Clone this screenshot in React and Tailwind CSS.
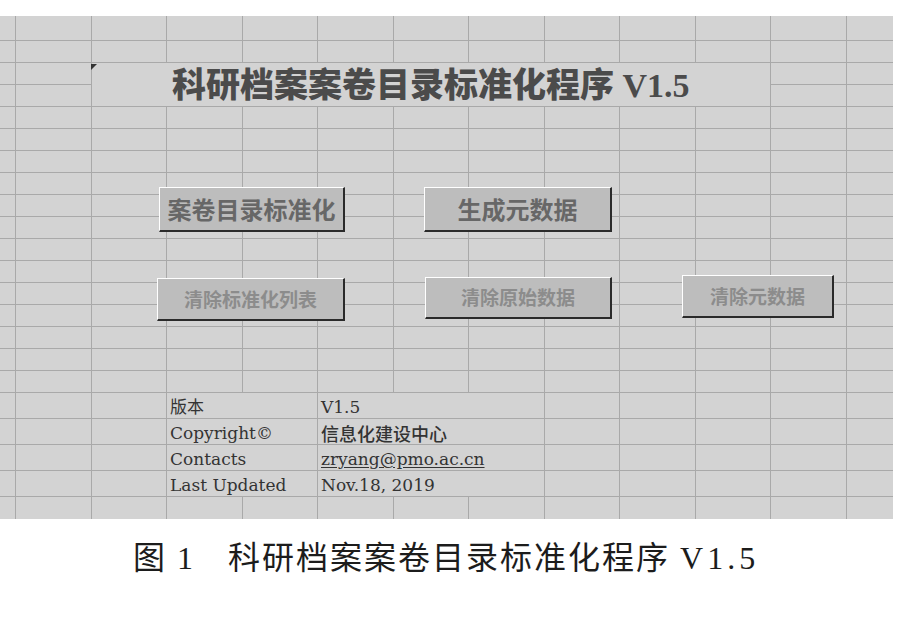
import React from 'react';

const infoRows = [
  { label: '版本', value: 'V1.5', row: 'row-start-18' },
  { label: 'Copyright©', value: '信息化建设中心', row: 'row-start-19', cjk: true },
  { label: 'Contacts', value: 'zryang@pmo.ac.cn', row: 'row-start-20', link: true },
  { label: 'Last Updated', value: 'Nov.18, 2019', row: 'row-start-21' },
];

const COLS = 13;
const ROWS = 22;

function isCovered(r, c) {
  // title block
  if (r >= 3 && r <= 4 && c >= 3 && c <= 11) return true;
  // info rows: label 4-5, value 6-8
  if (r >= 18 && r <= 21 && c >= 4 && c <= 8) return true;
  return false;
}

function cellClass(r, c) {
  if (r === ROWS && c === COLS) return '';
  if (r === ROWS) return 'border-r border-[#a9a9a9]';
  if (c === COLS) return 'border-b border-[#a9a9a9]';
  return 'border-b border-r border-[#a9a9a9]';
}

function SheetButton({ className, textClass, children }) {
  return (
    <div
      className={`absolute flex items-center justify-center bg-[#bdbdbd] border-t border-l border-white border-b-2 border-r-2 border-b-[#2a2a2a] border-r-[#2a2a2a] font-bold ${className}`}
    >
      <span className={textClass}>{children}</span>
    </div>
  );
}

export default function App() {
  const cells = [];
  for (let r = 1; r <= ROWS; r++) {
    for (let c = 1; c <= COLS; c++) {
      if (!isCovered(r, c)) cells.push(<div key={`${r}-${c}`} className={cellClass(r, c)} />);
    }
  }

  return (
    <div className="w-[920px] h-[637px] bg-white overflow-hidden">
      {/* Sheet */}
      <div className="relative mt-[16px] w-[893px] h-[503px] bg-[#d3d3d3] grid grid-cols-[16px_repeat(11,75.5px)_1fr] grid-rows-[25px_repeat(16,22px)_repeat(4,26px)_22px]">
        {/* Title (merged cell) */}
        <div className="relative col-start-3 col-span-9 row-start-3 row-span-2 border-b border-r border-[#a9a9a9] flex items-center justify-center">
          <svg className="absolute left-[-1px] top-[1px]" width="6" height="6" viewBox="0 0 6 6">
            <polygon points="0,0 6,0 0,6" fill="#333" />
          </svg>
          <span className="text-[34px] leading-none font-black text-[#4b4b4b] font-['Liberation_Serif','Noto_Sans_CJK_SC',serif] pt-[2px]">
            科研档案案卷目录标准化程序 V1.5
          </span>
        </div>

        {/* Info table */}
        {infoRows.map((item) => (
          <React.Fragment key={item.label}>
            <div className={`col-start-4 col-span-2 ${item.row} border-b border-r border-[#a9a9a9] flex items-end pl-[3px] pb-[1px]`}>
              <span className="text-[17px] leading-[20px] text-[#333] font-['DejaVu_Serif','Noto_Sans_CJK_SC',serif]">
                {item.label}
              </span>
            </div>
            <div className={`col-start-6 col-span-3 ${item.row} border-b border-r border-[#a9a9a9] flex items-end pl-[3px] pb-[1px]`}>
              <span
                className={
                  item.cjk
                    ? 'text-[18px] leading-[20px] text-[#333] font-medium font-["Noto_Sans_CJK_SC",sans-serif]'
                    : item.link
                    ? 'text-[17px] leading-[20px] text-[#333] underline underline-offset-2 font-["DejaVu_Serif",serif]'
                    : 'text-[17px] leading-[20px] text-[#333] font-["DejaVu_Serif",serif]'
                }
              >
                {item.value}
              </span>
            </div>
          </React.Fragment>
        ))}

        {cells}

        {/* Form buttons floating on the sheet */}
        <SheetButton className="left-[159px] top-[171px] w-[186px] h-[45px]" textClass="text-[24px] text-[#676767] font-['Noto_Sans_CJK_SC',sans-serif]">
          案卷目录标准化
        </SheetButton>
        <SheetButton className="left-[424px] top-[171px] w-[188px] h-[45px]" textClass="text-[24px] text-[#676767] font-['Noto_Sans_CJK_SC',sans-serif]">
          生成元数据
        </SheetButton>
        <SheetButton className="left-[157px] top-[262px] w-[188px] h-[43px]" textClass="text-[19px] text-[#8c8c8c] font-['Noto_Sans_CJK_SC',sans-serif]">
          清除标准化列表
        </SheetButton>
        <SheetButton className="left-[425px] top-[261px] w-[187px] h-[42px]" textClass="text-[19px] text-[#8c8c8c] font-['Noto_Sans_CJK_SC',sans-serif]">
          清除原始数据
        </SheetButton>
        <SheetButton className="left-[682px] top-[259px] w-[152px] h-[43px]" textClass="text-[19px] text-[#8c8c8c] font-['Noto_Sans_CJK_SC',sans-serif]">
          清除元数据
        </SheetButton>
      </div>

      {/* Figure caption */}
      <div className="mt-[19px] pl-[133px] flex text-[32px] leading-[40px] tracking-[2px] text-[#1c1c1c] font-['Liberation_Serif','Noto_Sans_CJK_SC',serif]">
        <span>图 1</span>
        <span className="ml-[33px]">科研档案案卷目录标准化程序</span>
        <span className="ml-[10px] tracking-[4px]">V1.5</span>
      </div>
    </div>
  );
}
